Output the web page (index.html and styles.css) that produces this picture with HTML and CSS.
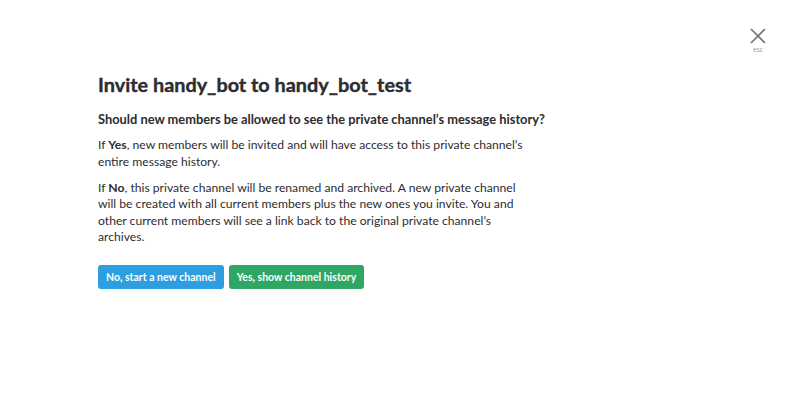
FILE: index.html
```html
<!DOCTYPE html>
<html>
<head>
<meta charset="utf-8">
<link rel="stylesheet" href="styles.css">
</head>
<body>
<div class="page">
  <div class="close">
    <svg width="16" height="16" viewBox="0 0 16 16"><path d="M1 1 L15 15 M15 1 L1 15" stroke="#717274" stroke-width="1.6" fill="none"/></svg>
    <span class="esc">esc</span>
  </div>
  <div class="modal">
    <h1 class="title">Invite handy_bot to handy_bot_test</h1>
    <p class="question">Should new members be allowed to see the private channel’s message history?</p>
    <p class="text">If <b>Yes</b>, new members will be invited and will have access to this private channel’s entire message history.</p>
    <p class="text">If <b>No</b>, this private channel will be renamed and archived. A new private channel will be created with all current members plus the new ones you invite. You and other current members will see a link back to the original private channel’s archives.</p>
    <div class="actions">
      <button class="btn btn-blue">No, start a new channel</button>
      <button class="btn btn-green">Yes, show channel history</button>
    </div>
  </div>
</div>
</body>
</html>
```
FILE: styles.css
```css
html, body {
  margin: 0;
  padding: 0;
  background: #fff;
}
body {
  font-family: Lato, "Open Sans", sans-serif;
  color: #2c2d30;
}
.page {
  position: relative;
  width: 800px;
  height: 417px;
}
.close {
  position: absolute;
  top: 28px;
  left: 749px;
  display: flex;
  flex-direction: column;
  align-items: center;
  width: 18px;
}
.close svg {
  display: block;
}
.esc {
  font-size: 7px;
  color: #9e9ea6;
  line-height: 8px;
  margin-top: 1px;
}
.modal {
  padding: 70px 0 0 98px;
  width: 470px;
}
.title {
  font-size: 19.85px;
  font-weight: 700;
  -webkit-text-stroke: 0.4px #2c2d30;
  margin: 0 0 12px;
  line-height: 28px;
}
.question {
  font-size: 12.85px;
  font-weight: 700;
  margin: 0 0 9px;
  line-height: 18px;
  white-space: nowrap;
}
.text {
  font-size: 12.15px;
  line-height: 16.6px;
  margin: 0 0 9.5px;
  max-width: 432px;
}
.text b {
  font-weight: 700;
}
.actions {
  display: flex;
  gap: 5px;
  margin-top: 19px;
}
.btn {
  font-family: Lato, sans-serif;
  font-weight: 700;
  font-size: 10.5px;
  color: #fff;
  border: none;
  border-radius: 3px;
  height: 24px;
  padding: 0 8px;
  cursor: pointer;
}
.btn-blue {
  background: #2d9ee0;
}
.btn-green {
  background: #2ea664;
}
```
